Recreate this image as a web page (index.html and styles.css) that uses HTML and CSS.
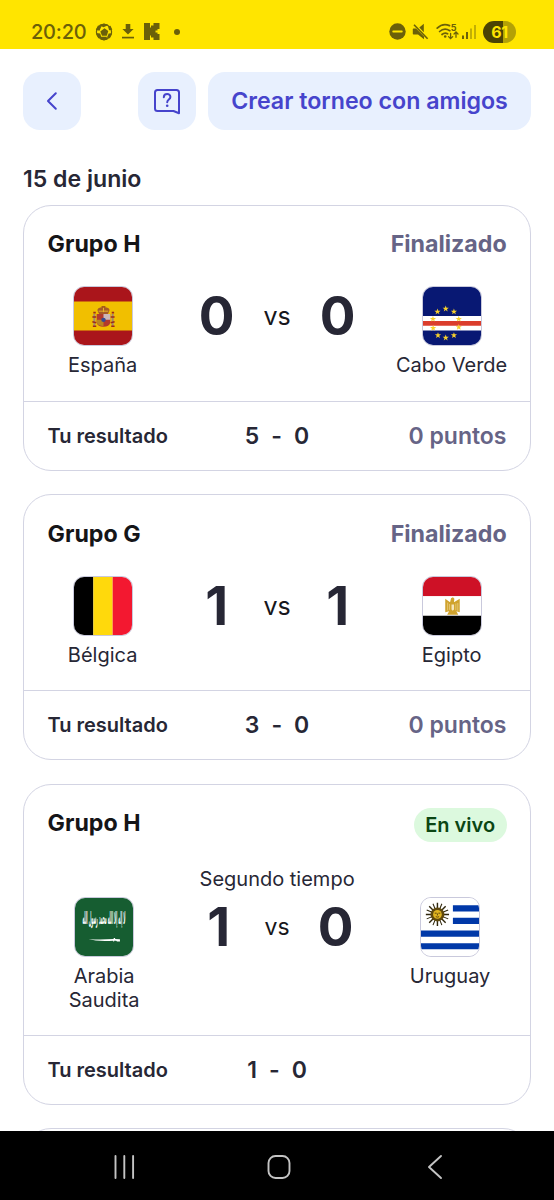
FILE: index.html
```html
<!DOCTYPE html>
<html lang="es">
<head>
<meta charset="utf-8">
<title>Resultados</title>
<link rel="stylesheet" href="styles.css">
</head>
<body>
<div class="phone">
  <header class="status">
    <div class="status-left">
      <span class="clock">20:20</span>
      <svg class="ball" width="18" height="18" viewBox="0 0 18 18"><circle cx="9" cy="9" r="7.600" fill="none" stroke="currentColor" stroke-width="1.200"/><path fill="currentColor" d="M9.500 5.200l3.800 2.900-1.500 4.600H7L5.300 8.400zM4 2L8.500 4.200l5-2.200L9 .5zM.8 6.800l3.700.9L6.500 3.300 3 2.600zM17.300 6.800l-3.200.5L12.900 3.300l2.600-.6zM.9 9.900l4.300.5 1.300 4.300-3.200.6zM17.200 10.200l-3.500.3-1.800 4.200 3 .5zM6 13.800h5.600l.8 2.700-3.400 1-3.500-1z"/></svg>
      <svg class="down" width="14" height="17" viewBox="0 0 14 17"><path fill="currentColor" d="M4.700 1h4.600v5h3.300L7 11.500 1.400 6h3.300z"/><path stroke="currentColor" stroke-width="1.700" d="M1 14.600h12"/></svg>
      <svg class="kick" width="16" height="17" viewBox="0 0 16 17" fill="currentColor"><rect width="6" height="17"/><rect x="5" y="4.500" width="6.500" height="8"/><rect x="7" y="2.500" width="6.500" height="5"/><rect x="7" y="9.500" width="6.500" height="5"/><rect x="9.500" width="6" height="6"/><rect x="9.500" y="11" width="6" height="6"/></svg>
      <span class="dot"></span>
    </div>
    <div class="status-right">
      <svg width="17" height="17" viewBox="0 0 17 17"><circle cx="8.500" cy="8.500" r="8.200" fill="currentColor"/><path d="M4.200 8.500h8.600" stroke="#ffe500" stroke-width="1.800" stroke-linecap="round"/></svg>
      <svg class="mute" width="17" height="17" viewBox="0 0 17 17"><path fill="currentColor" d="M1.500 5.500h2.600L12 13.500v2.700L6 11.500H1.500Q.8 11.500.8 10.800V6.200Q.8 5.500 1.500 5.500zM7.300 4.600L11.800.8v8.400z"/><path stroke="currentColor" stroke-width="1.600" d="M2 1.800l13.600 14"/></svg>
      <svg class="wifi" width="23" height="18" viewBox="0 0 23 18"><g fill="none" stroke="currentColor" stroke-width="1.700" stroke-linecap="round"><path d="M1.200 5.200C4.800 1.600 9.500.9 13.500 2.600M3.600 8.500c3-2.800 6.800-3.100 10.200-.8M6 11.500c1.700-1.500 3.700-1.800 5.600-.7"/><path d="M14.600 10.300v5M12.500 13.600l2.100 2.100 2.100-2.100M20 14.300v-5M18 11l2-2 2 2" stroke-width="1.300"/></g><circle cx="9.200" cy="13.500" r="1.300" fill="currentColor"/><text x="14.800" y="7.600" class="wifi-num">5</text></svg>
      <svg class="signal" width="15" height="16" viewBox="0 0 15 16" fill="currentColor"><rect x="0" y="11.500" width="2" height="3.500"/><rect x="4" y="8" width="2" height="7"/><g opacity=".4"><rect x="8" y="4.500" width="2" height="10.500"/><rect x="12" y="1" width="2" height="14"/></g></svg>
      <span class="battery">61</span>
    </div>
  </header>

  <main class="screen">
    <nav class="toolbar">
      <button class="btn square" aria-label="Volver"><svg width="24" height="24" viewBox="0 0 24 24"><path d="M15.800 4.200L8 12l7.800 7.800" class="line"/></svg></button>
      <span class="grow"></span>
      <button class="btn square" aria-label="Ayuda"><svg width="28" height="28" viewBox="0 0 28 28"><path class="line" d="M26 26.200L20.500 24H4.500Q2 24 2 21.500v-16Q2 3 4.500 3h19Q26 3 26 5.500z"/><path class="line" d="M10.800 10.300c.2-4.300 6.600-4.200 6.600-.2 0 2.400-3.200 2.600-3.200 5.100"/><circle cx="14.200" cy="18.800" r="1.300" fill="currentColor"/></svg></button>
      <button class="btn wide">Crear torneo con amigos</button>
    </nav>
    <h1 class="date">15 de junio</h1>

    <section class="card">
      <div class="body">
        <div class="head"><h2>Grupo H</h2><span class="done">Finalizado</span></div>
        <div class="match">
          <div class="team">
            <svg class="flag" viewBox="0 0 60 60"><path fill="#aa151b" d="M0 0h60v60H0z"/><path fill="#f1bf00" d="M0 15h60v30H0z"/>
              <path fill="#b23a2c" d="M23.500 28h14v9q-1 4-7 4t-7-4z"/><path fill="#cbb8b8" d="M30.500 28h7v6h-7z"/><path fill="#b98420" d="M23.500 34h7v6.500q-6-.5-7-3.500z"/><circle cx="30.500" cy="34" r="2.300" fill="#354a92"/><path fill="#a65a28" d="M25 26q-3-5 5.500-5t5.500 5l-1 2h-9z"/><path stroke="#e8b72a" stroke-width="1" d="M25.500 25h10M30.500 21v5"/><path stroke="#8b3a1c" stroke-width="1.200" d="M28.500 20.500h4"/>
              <path stroke="#a08870" stroke-width="2" d="M21 28v12M40 28v12"/><path stroke="#9d291c" stroke-width="1.600" d="M19 31h4M19 36l4 1M38 31h4M38 37l4-1M19.500 40.500h3.500M38.500 40.500H42M20 26.500h2.500M39 26.500h2.500"/></svg>
            <span>España</span>
          </div>
          <div class="score"><b>0</b><span>vs</span><b>0</b></div>
          <div class="team">
            <svg class="flag" viewBox="0 0 60 60"><defs><path id="star" fill="#f7d02c" d="M0-3.300L.8-1h2.400L1.300.5 2 2.800 0 1.400-2 2.800-1.300.5-3.200-1H-.8z"/></defs><path fill="#081873" d="M0 0h60v60H0z"/><path fill="#fff" d="M0 30h60v15H0z"/><path fill="#db3d2c" d="M0 35.200h60v4.800H0z"/><use href="#star" x="23.500" y="22.500"/><use href="#star" x="15" y="25.500"/><use href="#star" x="32" y="25.500"/><use href="#star" x="10.300" y="33"/><use href="#star" x="37" y="33"/><use href="#star" x="10.500" y="42.500"/><use href="#star" x="37" y="41.500"/><use href="#star" x="15.500" y="50"/><use href="#star" x="23.500" y="52.500"/><use href="#star" x="32" y="50"/></svg>
            <span>Cabo Verde</span>
          </div>
        </div>
      </div>
      <div class="foot"><span>Tu resultado</span><span class="guess"><i>5</i><i>-</i><i>0</i></span><span class="points">0 puntos</span></div>
    </section>

    <section class="card second">
      <div class="body">
        <div class="head"><h2>Grupo G</h2><span class="done">Finalizado</span></div>
        <div class="match">
          <div class="team">
            <svg class="flag" viewBox="0 0 60 60"><path d="M0 0h20v60H0z"/><path fill="#ffd90c" d="M20 0h20v60H20z"/><path fill="#f31830" d="M40 0h20v60H40z"/></svg>
            <span>Bélgica</span>
          </div>
          <div class="score"><b>1</b><span>vs</span><b>1</b></div>
          <div class="team">
            <svg class="flag" viewBox="0 0 60 60"><path fill="#ce1126" d="M0 0h60v20H0z"/><path fill="#fff" d="M0 20h60v20H0z"/><path d="M0 40h60v20H0z"/><path fill="#d0a32e" d="M23 22.500l5 3.500 1-4 2-1 1.500 1.500-.5 3.500 6-3.500v14l-3.500-1 2 3.500H25l2-3.500-4 1z"/><path stroke="#f3dfa4" stroke-width=".6" d="M25.500 26.500v8M27.500 28v6M34 27.500v7M36 27v8"/><path fill="#f6e6bd" d="M29.500 28.500h2.600v5l-1.300 1.500-1.300-1.500z"/></svg>
            <span>Egipto</span>
          </div>
        </div>
      </div>
      <div class="foot"><span>Tu resultado</span><span class="guess"><i>3</i><i>-</i><i>0</i></span><span class="points">0 puntos</span></div>
    </section>

    <section class="card live">
      <div class="body">
        <div class="head"><h2>Grupo H</h2><span class="pill">En vivo</span></div>
        <p class="phase">Segundo tiempo</p>
        <div class="match">
          <div class="team">
            <svg class="flag" viewBox="0 0 60 60"><path fill="#165d31" d="M0 0h60v60H0z"/><text class="creed" transform="translate(30 27) scale(.26 1.500)">لا إله إلا الله محمد رسول الله</text><path fill="#fff" d="M14 42.300q9 1.200 26 .2v-1h1.500v1l5 .2v2.300h-3l-1-.8h-2v.8h-1v-.9q-17 1-25.500-1.800z"/></svg>
            <span>Arabia<br>Saudita</span>
          </div>
          <div class="score"><b>1</b><span>vs</span><b>0</b></div>
          <div class="team">
            <svg class="flag" viewBox="0 0 60 60"><path fill="#fff" d="M0 0h60v60H0z"/><path fill="#0038a8" d="M33 7.500h27V14H33zM33 20.500h27V27H33zM0 33.700h60V40H0zM0 46.800h60v6.300H0z"/><g stroke="#30270d" stroke-width="1.500"><path d="M17 5v24M5 17h24M8.500 8.500l17 17M25.500 8.500l-17 17"/><path stroke-width="1.100" d="M12.400 5.900l9.200 22.200M21.600 5.900l-9.200 22.200M5.900 12.400l22.200 9.200M28.100 12.400L5.900 21.600"/></g><circle cx="17" cy="17" r="7.200" fill="#5f480e"/><circle cx="17" cy="17" r="4.500" fill="#e0b420"/><path stroke="#5c430a" stroke-width="1" fill="none" d="M14.200 15.700h2M18 15.700h2M15.300 19.300q1.700 1 3.400 0M17 16v2"/></svg>
            <span>Uruguay</span>
          </div>
        </div>
      </div>
      <div class="foot"><span>Tu resultado</span><span class="guess"><i>1</i><i>-</i><i>0</i></span><span class="points"></span></div>
    </section>
    <section class="card next"></section>
  </main>

  <footer class="navbar">
    <svg width="24" height="26" viewBox="0 0 24 26"><path d="M2.500 2v22M11.300 2v22M20.100 2v22"/></svg>
    <svg width="26" height="26" viewBox="0 0 26 26"><rect x="2.500" y="2" width="21" height="22" rx="7"/></svg>
    <svg width="24" height="26" viewBox="0 0 24 26"><path d="M21 2L9 13l12 11"/></svg>
  </footer>
</div>
</body>
</html>
```
FILE: styles.css
```css
* { box-sizing: border-box; margin: 0; padding: 0; }
body { background: #fff; font-family: Inter, "Liberation Sans", sans-serif; color: #272735; }
.phone { width: 554px; height: 1200px; display: flex; flex-direction: column; overflow: hidden; }
svg { display: block; flex: none; }

.status { flex: none; height: 49px; background: #ffe500; color: #6b6009; display: flex; justify-content: space-between; padding: 15px 38px 0 31px; }
.status-left, .status-right { display: flex; align-items: center; height: 34px; }
.status-left { padding-bottom: 1px; }
.status-right { padding-bottom: 1px; }
.clock { font-size: 20px; font-weight: 500; width: 64px; letter-spacing: -.2px; }
.down { margin-left: 8px; }
.kick { margin-left: 9px; }
.dot { width: 6px; height: 6px; border-radius: 50%; background: currentColor; margin-left: 14px; }
.mute { margin-left: 6px; }
.wifi { margin-left: 7px; }
.wifi-num { font: 700 9px Inter, sans-serif; fill: currentColor; }
.signal { margin-left: 3px; }
.battery { margin-left: 6px; width: 33px; height: 22px; border-radius: 11px; background: linear-gradient(90deg, #4b4304 0 61%, #b3a106 61%); color: #ffe500; font-size: 16px; font-weight: 700; line-height: 22px; text-align: center; letter-spacing: -.5px; }

.screen { flex: none; height: 1082px; padding: 23px 23px 0; overflow: hidden; }
.toolbar { display: flex; }
.grow { flex: 1; }
.btn { height: 58px; border: 0; border-radius: 17px; background: #e8f0fe; color: #4644cc; display: flex; align-items: center; justify-content: center; font: 600 23.200px Inter, sans-serif; white-space: nowrap; }
.square { width: 58px; }
.wide { width: 323px; margin-left: 12px; }
.line { fill: none; stroke: currentColor; stroke-width: 2; stroke-linecap: round; stroke-linejoin: round; }
.date { font-size: 23.100px; font-weight: 600; line-height: 28px; margin: 35px 0 12px; }

.card { width: 508px; height: 266px; border: 1px solid #d3d4e3; border-radius: 28px; margin-bottom: 23px; display: flex; flex-direction: column; }
.second { margin-bottom: 24px; }
.body { flex: 1; padding: 24px 23.400px 0 23.600px; }
.second .body { padding-top: 25px; }
.head { display: flex; justify-content: space-between; height: 28px; line-height: 28px; }
h2 { font-size: 23.200px; font-weight: 700; color: #151518; }
.done { font-size: 23.200px; font-weight: 700; color: #666486; }
.match { display: grid; grid-template-columns: 110px 1fr 110px; margin-top: 28px; }
.team { display: flex; flex-direction: column; align-items: center; font-size: 20px; line-height: 24px; text-align: center; gap: 7px; white-space: nowrap; }
.flag { width: 60px; height: 60px; border-radius: 11px; border: .5px solid #c9c9dc; }
.score { display: grid; grid-template-columns: 60px 61px 60px; justify-content: center; align-items: center; justify-items: center; height: 60px; }
.score b { font-size: 53px; font-weight: 700; line-height: 60px; }
.score span { font-size: 25px; color: #17171c; }
.foot { flex: none; height: 69px; border-top: 1px solid #d3d4e3; padding: 0 23.500px; display: grid; grid-template-columns: 1fr 120px 1fr; align-items: center; font-size: 20px; font-weight: 600; }
.guess { display: flex; justify-content: center; gap: 12px; font-size: 23px; }
.guess i { font-style: normal; }
.points { text-align: right; font-size: 23px; color: #666486; }

.live { height: 321px; }
.live .body { padding-top: 23px; }
.live h2 { padding-top: 1px; }
.pill { height: 34px; border-radius: 17px; background: #dcf9de; color: #0b4613; padding: 0 11.500px; font-size: 20px; font-weight: 600; line-height: 34px; }
.phase { text-align: center; font-size: 20px; line-height: 24px; margin-top: 31px; }
.live .match { grid-template-columns: 113px 1fr 113px; margin-top: 6px; }
.live .score { grid-template-columns: 58px 59px 58px; }
.live .score span { font-size: 23px; }
.creed { fill: #fff; font: 700 12px "DejaVu Sans", sans-serif; text-anchor: middle; direction: rtl; }
.next { height: 266px; }

.navbar { flex: none; height: 69px; background: #000; display: flex; align-items: center; justify-content: space-between; padding: 3px 110px 0 113px; }
.navbar svg { fill: none; stroke: #c4c4c4; stroke-width: 1.900; stroke-linecap: round; stroke-linejoin: round; }
```
